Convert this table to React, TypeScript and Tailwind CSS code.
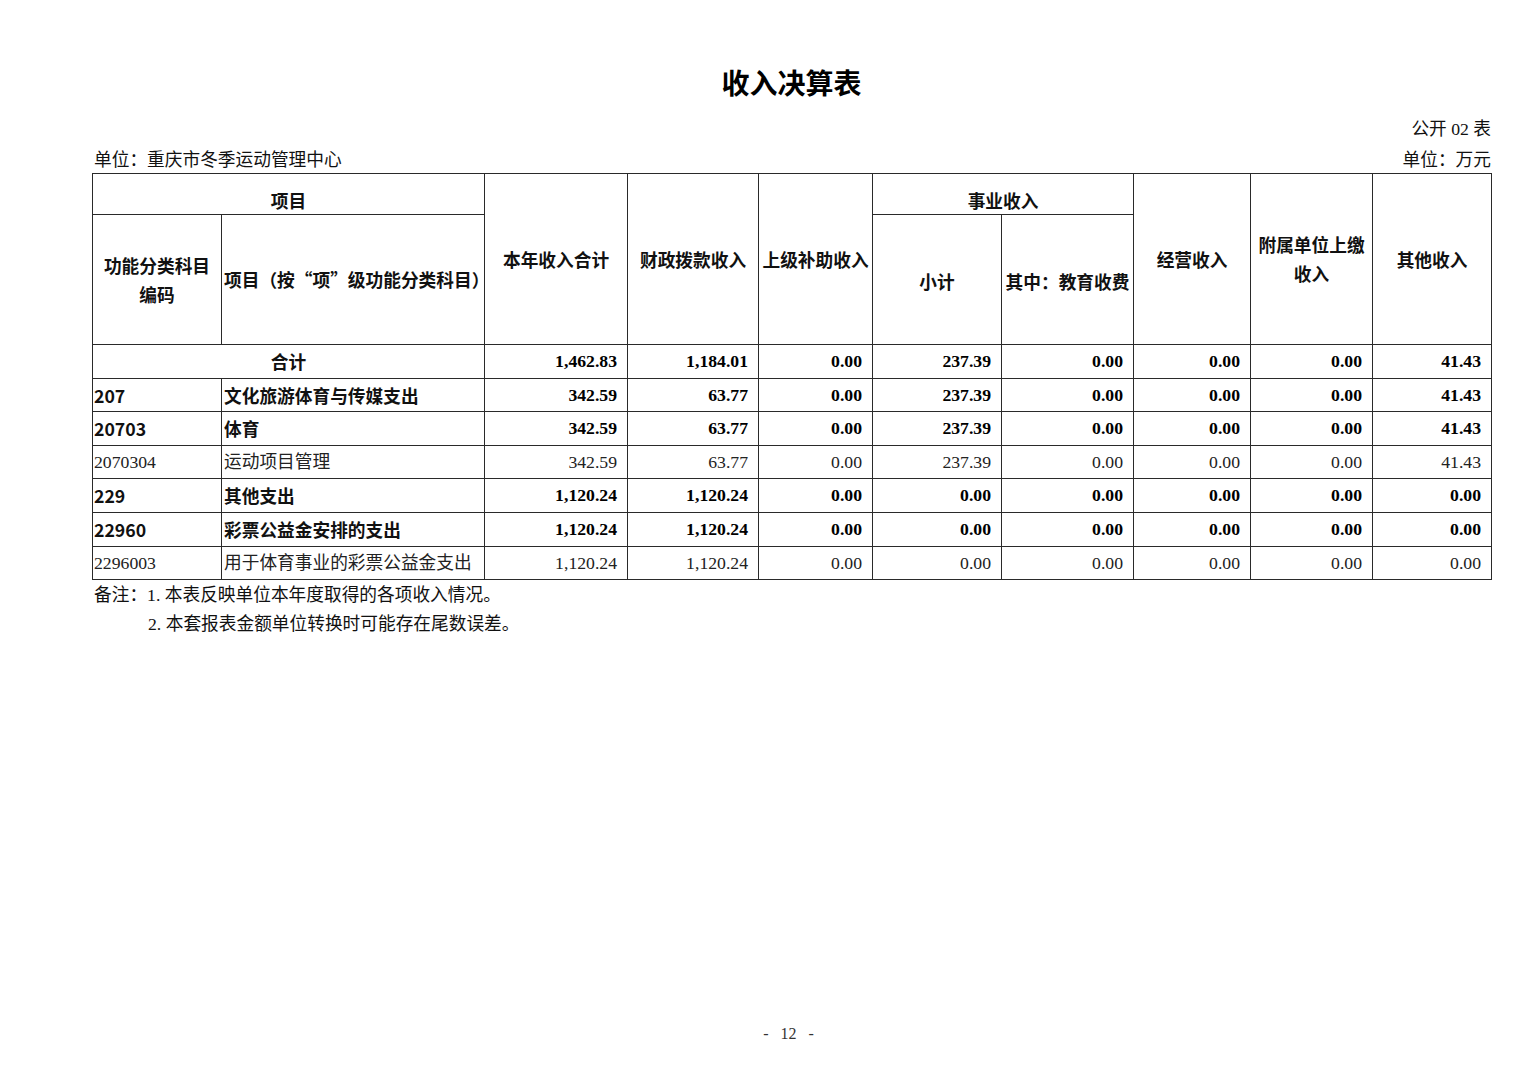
import React from 'react';

const serif = "font-['Liberation_Serif','Noto_Sans_CJK_SC',serif]";
const hei = "font-['Noto_Sans_CJK_SC','Liberation_Sans',sans-serif]";

type Row = {
  code?: string;
  name: string;
  bold: boolean;
  values: string[];
  total?: boolean;
};

const rows: Row[] = [
  { name: '合计', bold: true, total: true, values: ['1,462.83', '1,184.01', '0.00', '237.39', '0.00', '0.00', '0.00', '41.43'] },
  { code: '207', name: '文化旅游体育与传媒支出', bold: true, values: ['342.59', '63.77', '0.00', '237.39', '0.00', '0.00', '0.00', '41.43'] },
  { code: '20703', name: '体育', bold: true, values: ['342.59', '63.77', '0.00', '237.39', '0.00', '0.00', '0.00', '41.43'] },
  { code: '2070304', name: '运动项目管理', bold: false, values: ['342.59', '63.77', '0.00', '237.39', '0.00', '0.00', '0.00', '41.43'] },
  { code: '229', name: '其他支出', bold: true, values: ['1,120.24', '1,120.24', '0.00', '0.00', '0.00', '0.00', '0.00', '0.00'] },
  { code: '22960', name: '彩票公益金安排的支出', bold: true, values: ['1,120.24', '1,120.24', '0.00', '0.00', '0.00', '0.00', '0.00', '0.00'] },
  { code: '2296003', name: '用于体育事业的彩票公益金支出', bold: false, values: ['1,120.24', '1,120.24', '0.00', '0.00', '0.00', '0.00', '0.00', '0.00'] },
];

const cell = 'border border-[#2a2a2a] p-0';
const th = `${cell} ${hei} font-bold text-center align-middle leading-[29px]`;
const groupTh = `${cell} ${hei} font-bold text-center align-top leading-[24px] pt-[14px]`;

export default function App() {
  return (
    <div className={`min-h-[1069px] bg-white text-[#111] ${serif} text-[17.7px] flex flex-col`}>
      <div className="ml-[92px] w-[1399px] flex flex-col flex-1">
        <h1 className={`pt-[62px] h-[102px] leading-[40px] text-center text-[28px] font-bold ${hei} text-black`}>
          收入决算表
        </h1>
        <div className="mt-[14px] h-[26px] leading-[26px] text-right">公开 02 表</div>
        <div className="h-[31px] pt-[6px] leading-[25px] flex justify-between">
          <span className="pl-[2px]">单位：重庆市冬季运动管理中心</span>
          <span>单位：万元</span>
        </div>

        <table className="w-[1399px] table-fixed border-collapse">
          <colgroup>
            <col className="w-[129px]" />
            <col className="w-[263px]" />
            <col className="w-[143px]" />
            <col className="w-[131px]" />
            <col className="w-[114px]" />
            <col className="w-[129px]" />
            <col className="w-[132px]" />
            <col className="w-[117px]" />
            <col className="w-[122px]" />
            <col className="w-[119px]" />
          </colgroup>
          <thead>
            <tr className="h-[41px]">
              <th colSpan={2} className={groupTh}>项目</th>
              <th rowSpan={2} className={th}>本年收入合计</th>
              <th rowSpan={2} className={th}>财政拨款收入</th>
              <th rowSpan={2} className={`${th} whitespace-nowrap`}>上级补助收入</th>
              <th colSpan={2} className={groupTh}>事业收入</th>
              <th rowSpan={2} className={th}>经营收入</th>
              <th rowSpan={2} className={`${th} px-[6px]`}>附属单位上缴收入</th>
              <th rowSpan={2} className={th}>其他收入</th>
            </tr>
            <tr className="h-[130px]">
              <th className={`${th} px-[8px]`}>功能分类科目编码</th>
              <th className={`${th} text-left pl-[2px] whitespace-nowrap`}>项目（按“项”级功能分类科目）</th>
              <th className={`${th} pt-[4px]`}>小计</th>
              <th className={`${th} whitespace-nowrap pt-[4px]`}>其中：教育收费</th>
            </tr>
          </thead>
          <tbody>
            {rows.map((r, i) => (
              <tr key={i} className="h-[33.6px]">
                {r.total ? (
                  <td colSpan={2} className={`${cell} ${hei} font-bold text-center`}>{r.name}</td>
                ) : (
                  <>
                    <td className={`${cell} pl-[1px] ${r.bold ? `${hei} font-bold` : 'text-[#222]'}`}>{r.code}</td>
                    <td className={`${cell} pl-[2px] whitespace-nowrap ${r.bold ? `${hei} font-bold` : 'text-[#222]'}`}>{r.name}</td>
                  </>
                )}
                {r.values.map((v, j) => (
                  <td key={j} className={`${cell} text-right pr-[10px] ${r.bold ? 'font-bold text-black' : 'text-[#222]'}`}>
                    {v}
                  </td>
                ))}
              </tr>
            ))}
          </tbody>
        </table>

        <div className="leading-[29px] pt-[1px]">
          <p className="pl-[2px]">备注：1. 本表反映单位本年度取得的各项收入情况。</p>
          <p className="pl-[56px]">2. 本套报表金额单位转换时可能存在尾数误差。</p>
        </div>

        <div className="mt-auto pb-[25px] h-[45px] leading-[20px] text-center text-[16px] whitespace-pre text-[#333] pr-[6px]">
          -   12   -
        </div>
      </div>
    </div>
  );
}
